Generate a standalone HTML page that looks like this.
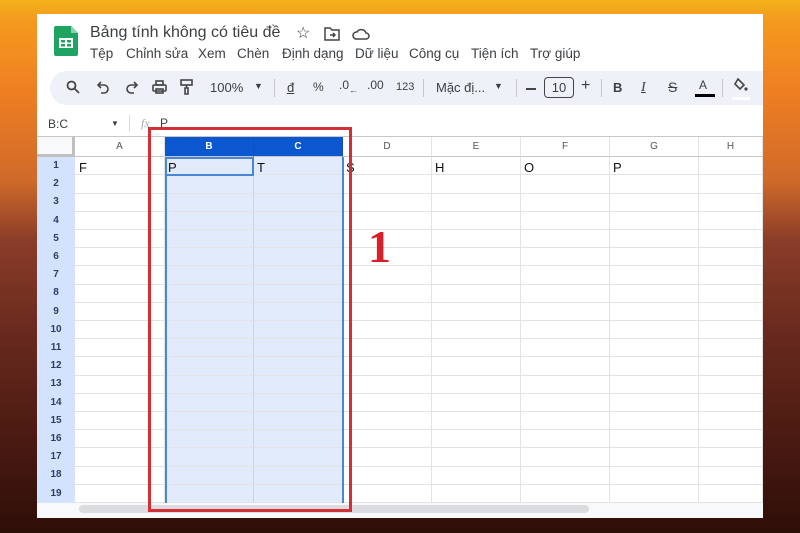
<!DOCTYPE html>
<html><head><meta charset="utf-8"><style>
*{margin:0;padding:0;box-sizing:border-box}
body{width:800px;height:533px;overflow:hidden;position:relative;font-family:"Liberation Sans",Arial,sans-serif;
background:linear-gradient(180deg,#f4b21a 0px,#f59a1e 20px,#ef7f22 90px,#d06a2a 180px,#8a3d28 240px,#6a2a1e 330px,#4a1a12 440px,#2e0e08 533px);}
.a{position:absolute}
.win{left:37px;top:14px;width:726px;height:504px;background:#fff}
.t{color:#3c4043;font-size:14px;white-space:nowrap}
.m{position:absolute;top:46px;color:#3c4043;font-size:13.5px;white-space:nowrap}
</style></head><body>
<div class="a win"></div>
<svg class="a" style="left:54px;top:26px" width="24" height="30" viewBox="0 0 24 30"><path d="M2 0h15l7 7v21a2 2 0 0 1-2 2H2a2 2 0 0 1-2-2V2a2 2 0 0 1 2-2z" fill="#1ea362"/><path d="M17 0v7h7z" fill="#8ed1b1"/><rect x="5" y="12" width="14" height="10" fill="#fff"/><rect x="7" y="14" width="4" height="2.5" fill="#1ea362"/><rect x="13" y="14" width="4" height="2.5" fill="#1ea362"/><rect x="7" y="18" width="4" height="2.5" fill="#1ea362"/><rect x="13" y="18" width="4" height="2.5" fill="#1ea362"/></svg>
<div class="a t" style="left:90px;top:24px;font-size:16px">Bảng tính không có tiêu đề</div>
<div class="a t" style="left:296px;top:23px;font-size:16px">☆</div>
<svg class="a" style="left:324px;top:27px" width="16" height="14" viewBox="0 0 16 14" fill="none" stroke="#444" stroke-width="1.5"><path d="M1 1h5l2 2h7v10H1z"/><path d="M6 8h5M9 6l2 2-2 2"/></svg>
<svg class="a" style="left:352px;top:27px" width="18" height="14" viewBox="0 0 18 14" fill="none" stroke="#444" stroke-width="1.5"><path d="M4 12h10a3 3 0 0 0 0-6 5 5 0 0 0-9-1 3.5 3.5 0 0 0-1 7z"/></svg>
<div class="m" style="left:90px">Tệp</div>
<div class="m" style="left:126px">Chỉnh sửa</div>
<div class="m" style="left:198px">Xem</div>
<div class="m" style="left:237px">Chèn</div>
<div class="m" style="left:282px">Định dạng</div>
<div class="m" style="left:355px">Dữ liệu</div>
<div class="m" style="left:409px">Công cụ</div>
<div class="m" style="left:471px">Tiện ích</div>
<div class="m" style="left:530px">Trợ giúp</div>
<div class="a" style="left:50px;top:71px;width:713px;height:34px;background:#eef2f8;border-radius:17px 0 0 17px"></div>
<svg class="a" style="left:66px;top:80px" width="14" height="14" fill="none" stroke="#444" stroke-width="1.8"><circle cx="5.5" cy="5.5" r="4"/><path d="M8.5 8.5l4.5 4.5"/></svg>
<svg class="a" style="left:97px;top:81px" width="13" height="13" fill="none" stroke="#444" stroke-width="1.6"><path d="M4 1L1 4l3 3"/><path d="M1 4h6a4 4 0 0 1 0 8H4"/></svg>
<svg class="a" style="left:125px;top:81px" width="13" height="13" fill="none" stroke="#444" stroke-width="1.6"><path d="M9 1l3 3-3 3"/><path d="M12 4H6a4 4 0 0 0 0 8h3"/></svg>
<svg class="a" style="left:152px;top:80px" width="15" height="14" fill="none" stroke="#444" stroke-width="1.6"><rect x="1" y="5" width="13" height="6" rx="1"/><rect x="4" y="1" width="7" height="4"/><rect x="4" y="9" width="7" height="4"/></svg>
<svg class="a" style="left:180px;top:79px" width="13" height="16" fill="none" stroke="#444" stroke-width="1.6"><rect x="1" y="1" width="11" height="5"/><path d="M6.5 6v3M5 9h3v6H5z"/></svg>
<div class="a t" style="left:210px;top:80px;font-size:13px">100%</div>
<div class="a t" style="left:254px;top:81px;font-size:9px">▼</div>
<div class="a" style="left:274px;top:79px;width:1px;height:18px;background:#c7c7c7"></div>
<div class="a t" style="left:287px;top:80px;font-size:13px;text-decoration:underline">đ</div>
<div class="a t" style="left:313px;top:80px;font-size:12px">%</div>
<div class="a t" style="left:339px;top:78px;font-size:12px">.0<span style="font-size:9px;position:relative;top:4px">←</span></div>
<div class="a t" style="left:367px;top:78px;font-size:12px">.00</div>
<div class="a t" style="left:396px;top:81px;font-size:11px">123</div>
<div class="a" style="left:423px;top:79px;width:1px;height:18px;background:#c7c7c7"></div>
<div class="a t" style="left:436px;top:80px;font-size:13px">Mặc đị...</div>
<div class="a t" style="left:494px;top:81px;font-size:9px">▼</div>
<div class="a" style="left:516px;top:79px;width:1px;height:18px;background:#c7c7c7"></div>
<div class="a" style="left:526px;top:88px;width:10px;height:1.5px;background:#444"></div>
<div class="a t" style="left:544px;top:77px;width:30px;height:21px;border:1px solid #444;border-radius:4px;font-size:13px;text-align:center;line-height:19px">10</div>
<div class="a t" style="left:581px;top:77px;font-size:16px">+</div>
<div class="a" style="left:601px;top:79px;width:1px;height:18px;background:#c7c7c7"></div>
<div class="a t" style="left:613px;top:80px;font-size:13px;font-weight:bold">B</div>
<div class="a t" style="left:641px;top:80px;font-size:14px;font-style:italic;font-family:'Liberation Serif',serif;text-decoration:underline">I</div>
<div class="a t" style="left:668px;top:79px;font-size:14px;text-decoration:line-through">S</div>
<div class="a t" style="left:699px;top:78px;font-size:12px">A</div>
<div class="a" style="left:695px;top:94px;width:20px;height:3px;background:#000"></div>
<div class="a" style="left:722px;top:79px;width:1px;height:18px;background:#c7c7c7"></div>
<svg class="a" style="left:733px;top:78px" width="16" height="16" fill="#444"><path d="M5 1l6 6-4 4-5-5z" fill="none" stroke="#444" stroke-width="1.6"/><circle cx="13" cy="11" r="1.6"/></svg>
<div class="a" style="left:732px;top:97px;width:18px;height:3px;background:#fff"></div>
<div class="a t" style="left:48px;top:117px;font-size:12px">B:C</div>
<div class="a t" style="left:111px;top:119px;font-size:8px">▼</div>
<div class="a" style="left:129px;top:115px;width:1px;height:17px;background:#ddd"></div>
<div class="a" style="left:141px;top:116px;font-size:12px;color:#aaa;font-style:italic;font-family:'Liberation Serif',serif">fx</div>
<div class="a t" style="left:160px;top:116px;font-size:12px">P</div>
<div class="a" style="left:37px;top:136px;width:726px;height:1px;background:#c7c7c7"></div>
<div class="a" style="left:37px;top:137px;width:38px;height:20px;background:#f8f9fa;border-right:3px solid #c0c0c0;border-bottom:3px solid #c0c0c0"></div>
<div class="a" style="left:37px;top:157px;width:38px;height:346px;background:#d3e3fd"></div>
<div class="a" style="left:165px;top:137px;width:178px;height:20px;background:#0b57d0"></div>
<div class="a" style="left:165px;top:157px;width:178px;height:346px;background:#e1ebfc"></div>
<div id="g"></div>
<script>
var g='';var cols=[75,165,254,343,432,521,610,699,763];var L='ABCDEFGH';
for(var i=0;i<8;i++){var sel=i==1||i==2;
g+='<div class="a" style="left:'+cols[i]+'px;top:137px;width:'+(cols[i+1]-cols[i])+'px;height:20px;border-right:1px solid '+(sel?'#1a4fb0':'#e2e3e3')+';border-bottom:1px solid #c7c7c7;font-size:10px;text-align:center;line-height:20px;color:'+(sel?'#fff':'#555')+';font-weight:'+(sel?'bold':'normal')+'">'+L[i]+'</div>';
g+='<div class="a" style="left:'+(cols[i+1]-1)+'px;top:157px;width:1px;height:346px;background:'+(sel?'#c6d4ea':'#e2e3e3')+'"></div>';}
for(var r=0;r<19;r++){var y=157+r*18.2;
g+='<div class="a" style="left:37px;top:'+y+'px;width:38px;height:18.2px;font-size:10px;font-weight:bold;text-align:center;line-height:18px;color:#2c3e66">'+(r+1)+'</div>';
g+='<div class="a" style="left:75px;top:'+(y+17.4)+'px;width:688px;height:1px;background:#e2e3e3"></div>';}
document.getElementById('g').innerHTML=g;
</script>
<div class="a" style="left:165px;top:157px;width:1.5px;height:346px;background:#4a86d6"></div>
<div class="a" style="left:342px;top:157px;width:1.5px;height:346px;background:#4a86d6"></div>
<div class="a" style="left:165px;top:157px;width:89px;height:19px;border:2px solid #4a86d6"></div>
<div class="a" style="left:79px;top:160px;font-size:13px;color:#111">F</div>
<div class="a" style="left:168px;top:160px;font-size:13px;color:#111">P</div>
<div class="a" style="left:257px;top:160px;font-size:13px;color:#111">T</div>
<div class="a" style="left:346px;top:160px;font-size:13px;color:#111">S</div>
<div class="a" style="left:435px;top:160px;font-size:13px;color:#111">H</div>
<div class="a" style="left:524px;top:160px;font-size:13px;color:#111">O</div>
<div class="a" style="left:613px;top:160px;font-size:13px;color:#111">P</div>
<div class="a" style="left:37px;top:503px;width:726px;height:15px;background:#f8f9fa"></div>
<div class="a" style="left:79px;top:505px;width:510px;height:8px;background:#dadce0;border-radius:4px"></div>
<div class="a" style="left:148px;top:127px;width:204px;height:385px;border:3px solid #d32f36"></div>
<div class="a" style="left:368px;top:220px;font-family:'Liberation Serif',serif;font-weight:bold;font-size:46px;color:#d7202a">1</div>
</body></html>
